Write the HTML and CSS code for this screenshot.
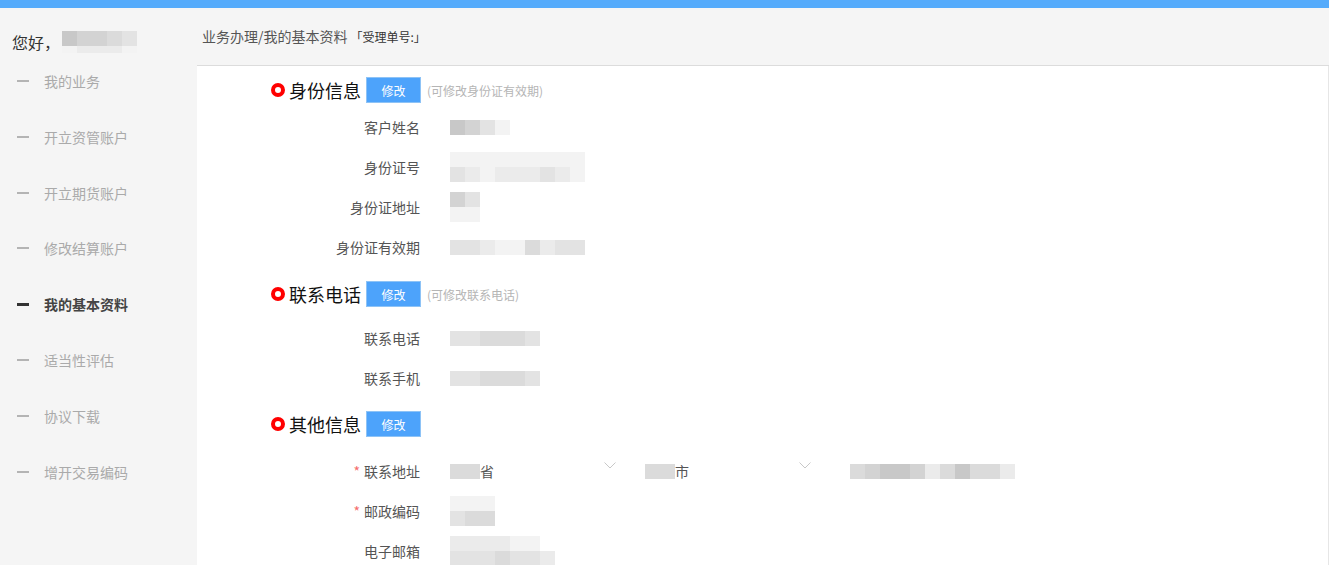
FILE: index.html
```html
<!DOCTYPE html>
<html lang="zh-CN">
<head>
    <meta charset="UTF-8">
    <title>我的基本资料</title>
    <link rel="stylesheet" href="styles.css">
</head>
<body>
<div class="app">
    <!-- 左侧菜单 -->
    <aside class="sidebar">
        <div class="greet">
            <span>您好，</span>
            <div class="blur">
                <div class="blur-row"><i class="p1"></i><i class="p2"></i><i class="p2"></i><i class="p3"></i><i class="p4"></i></div>
                <div class="blur-row short"><i class="p6"></i><i class="p5"></i><i class="p5"></i><i class="p5"></i><i class="p6"></i></div>
            </div>
        </div>
        <ul class="menu">
            <li><span class="dash"></span>我的业务</li>
            <li><span class="dash"></span>开立资管账户</li>
            <li><span class="dash"></span>开立期货账户</li>
            <li><span class="dash"></span>修改结算账户</li>
            <li class="active"><span class="dash"></span>我的基本资料</li>
            <li><span class="dash"></span>适当性评估</li>
            <li><span class="dash"></span>协议下载</li>
            <li><span class="dash"></span>增开交易编码</li>
        </ul>
    </aside>

    <div class="main">
        <div class="crumb">业务办理/我的基本资料<span class="order">「受理单号:」</span></div>

        <div class="content">
            <!-- 身份信息 -->
            <div class="sec sec-id">
                <div class="sec-head">
                    <span class="dot"></span><h3>身份信息</h3>
                    <button class="edit-btn">修改</button>
                    <span class="hint">(可修改身份证有效期)</span>
                </div>
                <div class="row">
                    <label>客户姓名</label>
                    <div class="blur">
                        <div class="blur-row"><i class="p1"></i><i class="p2"></i><i class="p4"></i><i class="p6"></i></div>
                    </div>
                </div>
                <div class="row">
                    <label>身份证号</label>
                    <div class="blur">
                        <div class="blur-row"><i class="p6"></i><i class="p6"></i><i class="p6"></i><i class="p6"></i><i class="p6"></i><i class="p6"></i><i class="p6"></i><i class="p6"></i><i class="p6"></i></div>
                        <div class="blur-row"><i class="p4"></i><i class="p5"></i><i class="p6"></i><i class="p5"></i><i class="p5"></i><i class="p5"></i><i class="p4"></i><i class="p5"></i><i class="p6"></i></div>
                    </div>
                </div>
                <div class="row">
                    <label>身份证地址</label>
                    <div class="blur">
                        <div class="blur-row"><i class="p2"></i><i class="p4"></i></div>
                        <div class="blur-row"><i class="p6"></i><i class="p6"></i></div>
                    </div>
                </div>
                <div class="row">
                    <label>身份证有效期</label>
                    <div class="blur">
                        <div class="blur-row"><i class="p4"></i><i class="p4"></i><i class="p5"></i><i class="p6"></i><i class="p6"></i><i class="p3"></i><i class="p5"></i><i class="p4"></i><i class="p4"></i></div>
                    </div>
                </div>
            </div>

            <!-- 联系电话 -->
            <div class="sec sec-phone">
                <div class="sec-head">
                    <span class="dot"></span><h3>联系电话</h3>
                    <button class="edit-btn">修改</button>
                    <span class="hint">(可修改联系电话)</span>
                </div>
                <div class="row">
                    <label>联系电话</label>
                    <div class="blur">
                        <div class="blur-row"><i class="p4"></i><i class="p4"></i><i class="p3"></i><i class="p3"></i><i class="p3"></i><i class="p4"></i></div>
                    </div>
                </div>
                <div class="row">
                    <label>联系手机</label>
                    <div class="blur">
                        <div class="blur-row"><i class="p4"></i><i class="p4"></i><i class="p3"></i><i class="p3"></i><i class="p3"></i><i class="p4"></i></div>
                    </div>
                </div>
            </div>

            <!-- 其他信息 -->
            <div class="sec sec-other">
                <div class="sec-head">
                    <span class="dot"></span><h3>其他信息</h3>
                    <button class="edit-btn">修改</button>
                </div>
                <div class="row">
                    <label><em>*</em>联系地址</label>
                    <div class="addr">
                        <div class="select">
                            <span class="val"><span class="blur-row"><i class="p3"></i><i class="p3"></i></span>省</span>
                            <svg class="arrow" width="12" height="7" viewBox="0 0 12 7"><path d="M0.5 0.5 L6 6 L11.5 0.5" fill="none" stroke="#c8c8c8" stroke-width="1"/></svg>
                        </div>
                        <div class="select">
                            <span class="val"><span class="blur-row"><i class="p3"></i><i class="p3"></i></span>市</span>
                            <svg class="arrow" width="12" height="7" viewBox="0 0 12 7"><path d="M0.5 0.5 L6 6 L11.5 0.5" fill="none" stroke="#c8c8c8" stroke-width="1"/></svg>
                        </div>
                        <div class="blur street">
                            <div class="blur-row"><i class="p3"></i><i class="p2"></i><i class="p1"></i><i class="p1"></i><i class="p2"></i><i class="p5"></i><i class="p3"></i><i class="p1"></i><i class="p3"></i><i class="p3"></i><i class="p5"></i></div>
                        </div>
                    </div>
                </div>
                <div class="row">
                    <label><em>*</em>邮政编码</label>
                    <div class="blur">
                        <div class="blur-row"><i class="p6"></i><i class="p6"></i><i class="p6"></i></div>
                        <div class="blur-row"><i class="p4"></i><i class="p3"></i><i class="p3"></i></div>
                    </div>
                </div>
                <div class="row">
                    <label>电子邮箱</label>
                    <div class="blur">
                        <div class="blur-row"><i class="p5"></i><i class="p5"></i><i class="p5"></i><i class="p5"></i><i class="p6"></i><i class="p6"></i></div>
                        <div class="blur-row"><i class="p4"></i><i class="p4"></i><i class="p4"></i><i class="p3"></i><i class="p4"></i><i class="p4"></i><i class="p5"></i></div>
                    </div>
                </div>
            </div>
        </div>
    </div>
</div>
</body>
</html>
```

FILE: styles.css
```css
body {
    margin: 0;
    font-family: "Noto Sans CJK SC", "Microsoft YaHei", sans-serif;
    background: #f5f5f5;
    border-top: 8px solid #55abfb;
    color: #555;
    height: 557px;
    overflow: hidden;
}
.app {
    display: flex;
    height: 100%;
}

/* sidebar */
.sidebar {
    width: 197px;
    flex-shrink: 0;
}
.greet {
    display: flex;
    align-items: center;
    height: 22px;
    margin-top: 23px;
    padding-left: 12px;
    font-size: 16px;
    color: #333;
}
.greet span {
    margin-right: 2px;
}
.menu {
    list-style: none;
    margin: 0;
    padding: 0;
}
.menu li {
    display: flex;
    align-items: center;
    height: 55.85px;
    padding-left: 17px;
    font-size: 14px;
    color: #aaa;
}
.dash {
    width: 12px;
    height: 2px;
    background: #b4b4b4;
    margin-right: 15px;
}
.menu li.active {
    color: #444;
    font-weight: bold;
}
.menu li.active .dash {
    height: 3px;
    background: #333;
}

/* mosaic placeholders */
.blur {
    display: flex;
    flex-direction: column;
}
.blur-row {
    display: flex;
}
.blur-row i {
    display: block;
    width: 15px;
    height: 15px;
}
.greet .blur-row.short i {
    height: 7px;
}
.p1 { background: #c8c8c8; }
.p2 { background: #d3d3d3; }
.p3 { background: #dbdbdb; }
.p4 { background: #e3e3e3; }
.p5 { background: #ebebeb; }
.p6 { background: #f3f3f3; }

/* main */
.main {
    flex: 1;
    display: flex;
    flex-direction: column;
}
.crumb {
    height: 57px;
    line-height: 57px;
    padding-left: 5px;
    font-size: 14px;
    color: #555;
    border-bottom: 1px solid #dcdcdc;
}
.order {
    margin-left: 3px;
    font-size: 12px;
    color: #333;
}
.content {
    flex: 1;
    background: #fff;
    border-right: 1px solid #e6e6e6;
    padding: 11px 0 0 73px;
}
.sec-head {
    display: flex;
    align-items: center;
    height: 26px;
}
.dot {
    width: 14px;
    height: 14px;
    box-sizing: border-box;
    border: 4px solid #f00;
    border-radius: 50%;
    margin: 0 4px 0 1px;
}
.sec-head h3 {
    margin: 0;
    font-size: 18px;
    font-weight: normal;
    color: #111;
}
.edit-btn {
    margin-left: 5px;
    width: 55px;
    height: 26px;
    background: #4da3fb;
    border: 1px solid #8ec3f6;
    color: #fff;
    font-family: inherit;
    font-size: 12px;
    padding: 0;
}
.hint {
    margin-left: 6px;
    font-size: 12px;
    color: #b5b5b5;
}
.row {
    display: grid;
    grid-template-columns: 150px 1fr;
    column-gap: 30px;
    align-items: center;
    height: 40px;
    font-size: 14px;
}
.row label {
    text-align: right;
    color: #555;
}
.row label em {
    font-style: normal;
    color: #f56c6c;
    margin-right: 4px;
}
.sec-id .sec-head { margin-bottom: 4px; }
.sec-id { margin-bottom: 14px; }
.sec-phone .sec-head { margin-bottom: 11px; }
.sec-phone { margin-bottom: 13px; }
.sec-other .sec-head { margin-bottom: 14px; }

.addr {
    display: flex;
    align-items: center;
    gap: 20px;
}
.select {
    width: 175px;
    height: 40px;
    display: flex;
    align-items: center;
    justify-content: space-between;
}
.select .val {
    display: flex;
    align-items: center;
    color: #555;
}
.arrow {
    margin: 0 9px 12px 0;
}
.street {
    margin-left: 10px;
}
```
